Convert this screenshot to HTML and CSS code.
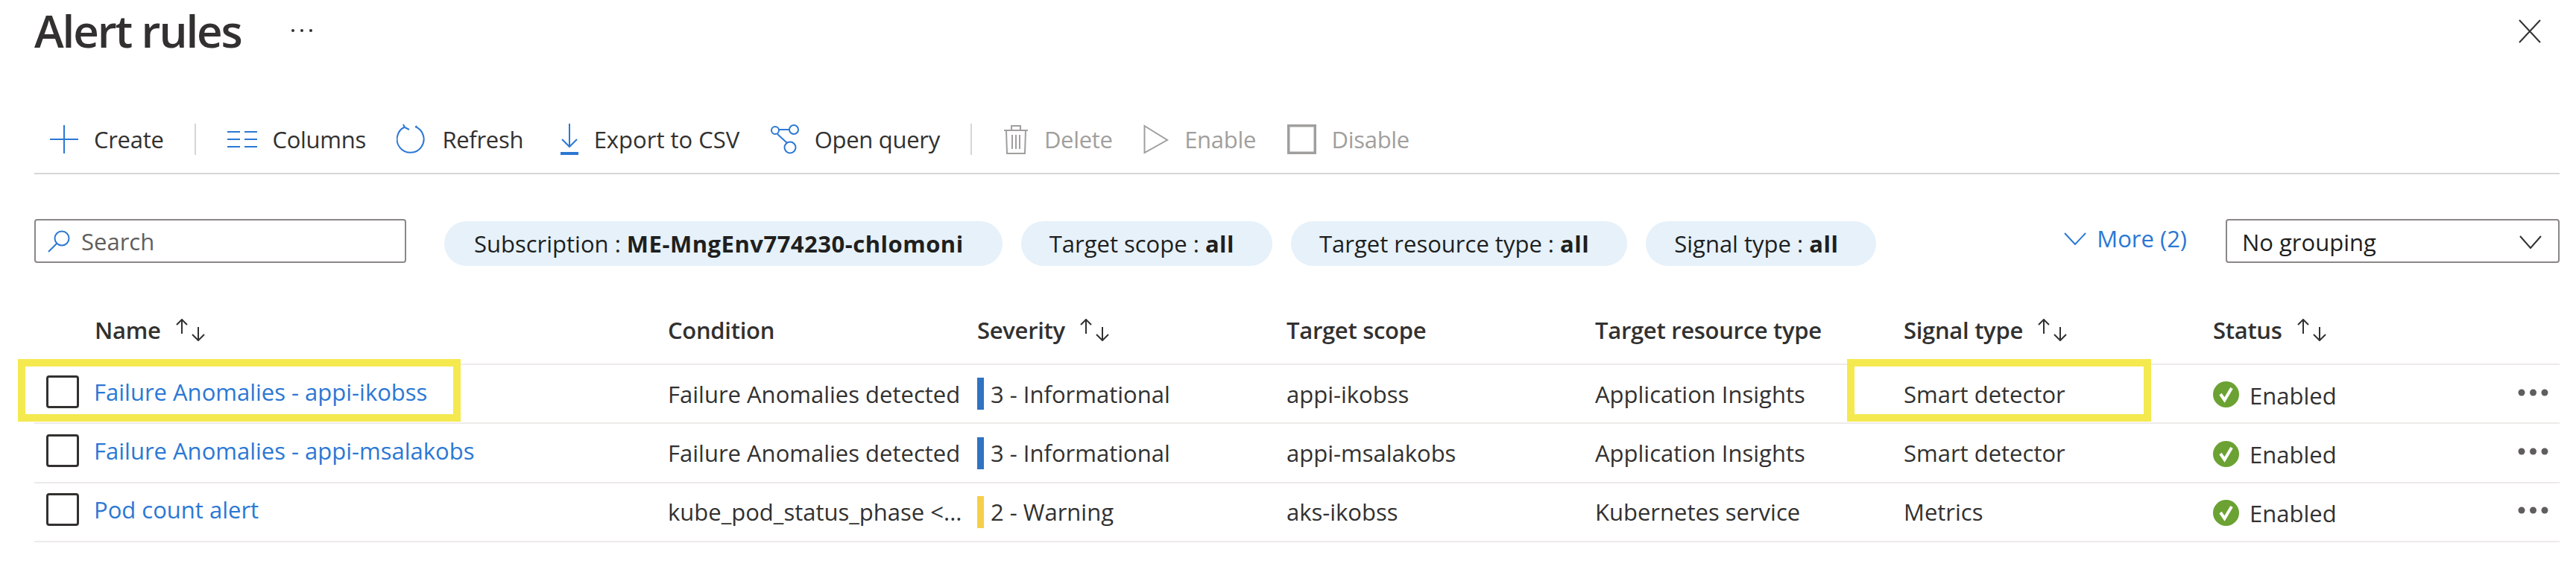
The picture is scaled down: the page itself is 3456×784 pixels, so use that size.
FILE: index.html
```html
<!DOCTYPE html>
<html lang="en">
<head>
  <meta charset="UTF-8">
  <title>Alert rules</title>
  <link rel="stylesheet" href="styles.css">
</head>
<body>

  <!-- Title -->
  <header class="title-bar">
    <h1>Alert rules</h1>
    <svg class="title-more" width="30" height="8" viewBox="0 0 30 8"><circle cx="3" cy="4" r="2"/><circle cx="15" cy="4" r="2"/><circle cx="27" cy="4" r="2"/></svg>
    <svg class="close" width="30" height="32" viewBox="0 0 30 32"><path d="M1 1 L29 31 M29 1 L1 31"/></svg>
  </header>

  <!-- Toolbar -->
  <nav class="toolbar">
    <span class="tool">
      <svg class="ico" width="38" height="40" viewBox="0 0 38 40"><path d="M19 1 V39 M0 20 H38"/></svg>
      Create
    </span>
    <span class="sep"></span>
    <span class="tool">
      <svg class="ico" width="40" height="24" viewBox="0 0 40 24"><path d="M0 2 H17 M23 2 H40 M0 12 H17 M23 12 H40 M0 22 H17 M23 22 H40"/></svg>
      Columns
    </span>
    <span class="tool">
      <svg class="ico" width="40" height="42" viewBox="0 0 40 42"><path d="M25 4 A18 18 0 1 1 11 4.500 M9 1 L11 5 L17 8 M26 3 A 18 18 0 0 1 27 4" /></svg>
      Refresh
    </span>
    <span class="tool tool-export">
      <svg class="ico" width="24" height="42" viewBox="0 0 24 42"><path d="M12 0 V31 M2 21 L12 31 L22 21"/><path class="thick" d="M0 40 H24"/></svg>
      Export to CSV
    </span>
    <span class="tool">
      <svg class="ico" width="38" height="40" viewBox="0 0 38 40"><circle cx="6" cy="8" r="5"/><circle cx="31" cy="7" r="6"/><circle cx="26" cy="31" r="7.500"/><path d="M11 7 H25 M9 13 L22 25"/></svg>
      Open query
    </span>
    <span class="sep"></span>
    <span class="tool disabled">
      <svg class="ico" width="34" height="40" viewBox="0 0 34 40"><path d="M1 8 H33 M4 8 L5 39 H29 L30 8 M11 8 V2 H23 V8 M12 14 V33 M17 14 V33 M22 14 V33"/></svg>
      Delete
    </span>
    <span class="tool disabled">
      <svg class="ico" width="34" height="40" viewBox="0 0 34 40"><path d="M1.500 2 L32 21 L1.500 38 Z"/></svg>
      Enable
    </span>
    <span class="tool disabled">
      <svg class="ico" width="39" height="40" viewBox="0 0 39 40"><path class="thick" d="M1.500 1.500 H37.500 V38.500 H1.500 Z"/></svg>
      Disable
    </span>
  </nav>

  <!-- Filters -->
  <section class="filters">
    <div class="search">
      <svg width="30" height="30" viewBox="0 0 30 30"><circle cx="19" cy="11" r="9.500"/><path d="M12 18 L1 29"/></svg>
      Search
    </div>
    <span class="pill pill-sub"><span>Subscription : <b>ME-MngEnv774230-chlomoni</b></span></span>
    <span class="pill"><span>Target scope : <b>all</b></span></span>
    <span class="pill"><span>Target resource type : <b>all</b></span></span>
    <span class="pill"><span>Signal type : <b>all</b></span></span>
    <span class="more">
      <svg width="30" height="17" viewBox="0 0 30 17"><path d="M1 1 L15 16 L29 1"/></svg>
      More (2)
    </span>
    <div class="grouping">
      No grouping
      <svg width="30" height="18" viewBox="0 0 30 18"><path d="M1 1 L15 17 L29 1"/></svg>
    </div>
  </section>

  <!-- Rules -->
  <section class="rules">
    <div class="row head">
      <div class="cell cell-name">Name <svg class="sort" width="40" height="30" viewBox="0 0 40 30"><use href="#sort-arrows"/></svg></div>
      <div class="cell">Condition</div>
      <div class="cell">Severity <svg class="sort" width="40" height="30" viewBox="0 0 40 30"><use href="#sort-arrows"/></svg></div>
      <div class="cell">Target scope</div>
      <div class="cell">Target resource type</div>
      <div class="cell">Signal type <svg class="sort" width="40" height="30" viewBox="0 0 40 30"><use href="#sort-arrows"/></svg></div>
      <div class="cell">Status <svg class="sort" width="40" height="30" viewBox="0 0 40 30"><use href="#sort-arrows"/></svg></div>
    </div>

    <div class="row">
      <div class="cell cell-name"><span class="check"></span><a class="link">Failure Anomalies - appi-ikobss</a><span class="mark mark-name"></span></div>
      <div class="cell">Failure Anomalies detected</div>
      <div class="cell"><span class="sev sev-info"></span>3 - Informational</div>
      <div class="cell">appi-ikobss</div>
      <div class="cell">Application Insights</div>
      <div class="cell">Smart detector<span class="mark mark-signal"></span></div>
      <div class="cell cell-status"><svg class="ok" width="35" height="35" viewBox="0 0 35 35"><use href="#ok-icon"/></svg>Enabled<svg class="dots" width="41" height="10" viewBox="0 0 41 10"><use href="#dots-icon"/></svg></div>
    </div>

    <div class="row">
      <div class="cell cell-name"><span class="check"></span><a class="link">Failure Anomalies - appi-msalakobs</a></div>
      <div class="cell">Failure Anomalies detected</div>
      <div class="cell"><span class="sev sev-info"></span>3 - Informational</div>
      <div class="cell">appi-msalakobs</div>
      <div class="cell">Application Insights</div>
      <div class="cell">Smart detector</div>
      <div class="cell cell-status"><svg class="ok" width="35" height="35" viewBox="0 0 35 35"><use href="#ok-icon"/></svg>Enabled<svg class="dots" width="41" height="10" viewBox="0 0 41 10"><use href="#dots-icon"/></svg></div>
    </div>

    <div class="row">
      <div class="cell cell-name"><span class="check"></span><a class="link">Pod count alert</a></div>
      <div class="cell">kube_pod_status_phase &lt;...</div>
      <div class="cell"><span class="sev sev-warn"></span>2 - Warning</div>
      <div class="cell">aks-ikobss</div>
      <div class="cell">Kubernetes service</div>
      <div class="cell">Metrics</div>
      <div class="cell cell-status"><svg class="ok" width="35" height="35" viewBox="0 0 35 35"><use href="#ok-icon"/></svg>Enabled<svg class="dots" width="41" height="10" viewBox="0 0 41 10"><use href="#dots-icon"/></svg></div>
    </div>
  </section>

  <!-- Shared icons -->
  <svg class="defs" width="0" height="0">
    <defs>
      <g id="sort-arrows" fill="none" stroke="#323130" stroke-width="2">
        <path d="M8 20 V1 M1 8 L8 1 L15 8"/>
        <path d="M30 11 V29 M22 21 L30 29 L38 21"/>
      </g>
      <g id="ok-icon">
        <circle cx="17.500" cy="17.500" r="17.500" fill="#6ba233"/>
        <path d="M10 17 L15.500 25 L25 9" fill="none" stroke="#fff" stroke-width="4"/>
      </g>
      <g id="dots-icon" fill="#605e5c">
        <circle cx="5" cy="5" r="4.500"/>
        <circle cx="20.500" cy="5" r="4.500"/>
        <circle cx="36" cy="5" r="4.500"/>
      </g>
    </defs>
  </svg>

</body>
</html>
```

FILE: styles.css
```css
body {
  font-family: "Open Sans", "Liberation Sans", sans-serif;
  font-size: 31px;
  margin: 0;
  padding: 0 22px 0 46px;
  background-color: white;
  color: #323130;
  overflow: hidden;
}

/* Title */
.title-bar {
  display: flex;
  height: 166px;
  align-items: flex-start;
}

h1 {
  font-size: 60px;
  font-weight: 600;
  line-height: 82px;
  margin: 0;
  letter-spacing: -2.1px;
}

.title-more {
  fill: #323130;
  margin: 37px 0 0 66px;
}

.close {
  fill: none;
  stroke: #323130;
  stroke-width: 2;
  margin: 26px 25px 0 auto;
}

/* Toolbar */
.toolbar {
  display: flex;
  align-items: center;
  gap: 41.500px;
  height: 42px;
  padding: 0 0 24px 21px;
  border-bottom: 2px solid #d6d6d6;
  letter-spacing: -0.3px;
}

.tool {
  display: flex;
  align-items: center;
  gap: 21px;
  white-space: nowrap;
}

.tool-export {
  margin-left: 8px;
  letter-spacing: 0;
}

.ico {
  fill: none;
  stroke: #2b78d4;
  stroke-width: 2;
  flex: none;
}

.ico .thick {
  stroke-width: 4;
}

.disabled {
  color: #a19f9d;
}

.disabled .ico {
  stroke: #a19f9d;
}

.sep {
  width: 2px;
  height: 42px;
  background-color: #d6d6d6;
}

/* Filters */
.filters {
  display: flex;
  align-items: flex-start;
  margin-top: 60px;
  height: 128px;
}

.search {
  display: flex;
  align-items: center;
  gap: 15px;
  box-sizing: border-box;
  width: 499px;
  height: 59px;
  padding-left: 16px;
  border: 2px solid #8a8886;
  border-radius: 4px;
  color: #605e5c;
}

.search svg {
  fill: none;
  stroke: #2b78d4;
  stroke-width: 2;
}

.pill {
  display: flex;
  align-items: center;
  white-space: pre;
  box-sizing: border-box;
  height: 60px;
  margin: 3px 0 0 25px;
  padding: 0 51px 0 38px;
  border-radius: 30px;
  background-color: #e6f1fa;
  color: #201f1e;
}

.pill-sub {
  margin-left: 51px;
  padding: 0 52px 0 40px;
}

.pill b {
  font-weight: 700;
  letter-spacing: 0.5px;
}

.more {
  display: flex;
  align-items: center;
  gap: 14px;
  margin: 0 52px 0 auto;
  height: 52px;
  color: #2b78d4;
}

.more svg {
  fill: none;
  stroke: #2b78d4;
  stroke-width: 2;
}

.grouping {
  display: flex;
  align-items: center;
  justify-content: space-between;
  box-sizing: border-box;
  width: 448px;
  height: 59px;
  padding: 2px 22px 0 20px;
  border: 2px solid #8a8886;
  border-radius: 4px;
  color: #201f1e;
}

.grouping svg {
  fill: none;
  stroke: #323130;
  stroke-width: 2;
}

/* Rules table */
.row {
  display: grid;
  grid-template-columns: 850px 415px 415px 414px 414px 415px 465px;
  align-items: center;
  height: 77.400px;
  border-bottom: 2px solid #edebe9;
  position: relative;
}

.head {
  height: 66px;
  font-weight: 600;
  align-items: start;
  letter-spacing: -0.3px;
}

.cell {
  display: flex;
  align-items: center;
  white-space: nowrap;
}

.cell-name {
  padding-left: 16px;
  gap: 20px;
  padding-bottom: 6px;
}

.head .cell-name {
  padding-left: 81px;
  padding-bottom: 0;
  gap: 20px;
}

.head .cell {
  gap: 20px;
}

.check {
  box-sizing: border-box;
  width: 44px;
  height: 44px;
  border: 3px solid #323130;
  border-radius: 4px;
  flex: none;
}

.link {
  color: #2b78d4;
}

.sev {
  width: 9px;
  height: 43px;
  margin-right: 9px;
}

.sev-info {
  background-color: #2f73c2;
}

.sev-warn {
  background-color: #f6cf4a;
}

.cell-status {
  padding: 4px 15px 0 0;
}

.ok {
  margin: 0 14px 2px 0;
  flex: none;
}

.dots {
  margin: 0 0 8px auto;
}

/* Yellow highlight boxes over the table */
.mark {
  position: absolute;
  top: -8px;
  height: 84px;
  box-sizing: border-box;
  border: 10px solid #f4e94f;
}

.mark-name {
  left: -22px;
  width: 594px;
}

.mark-signal {
  left: 2432px;
  width: 408px;
}

.defs {
  position: absolute;
}
```
